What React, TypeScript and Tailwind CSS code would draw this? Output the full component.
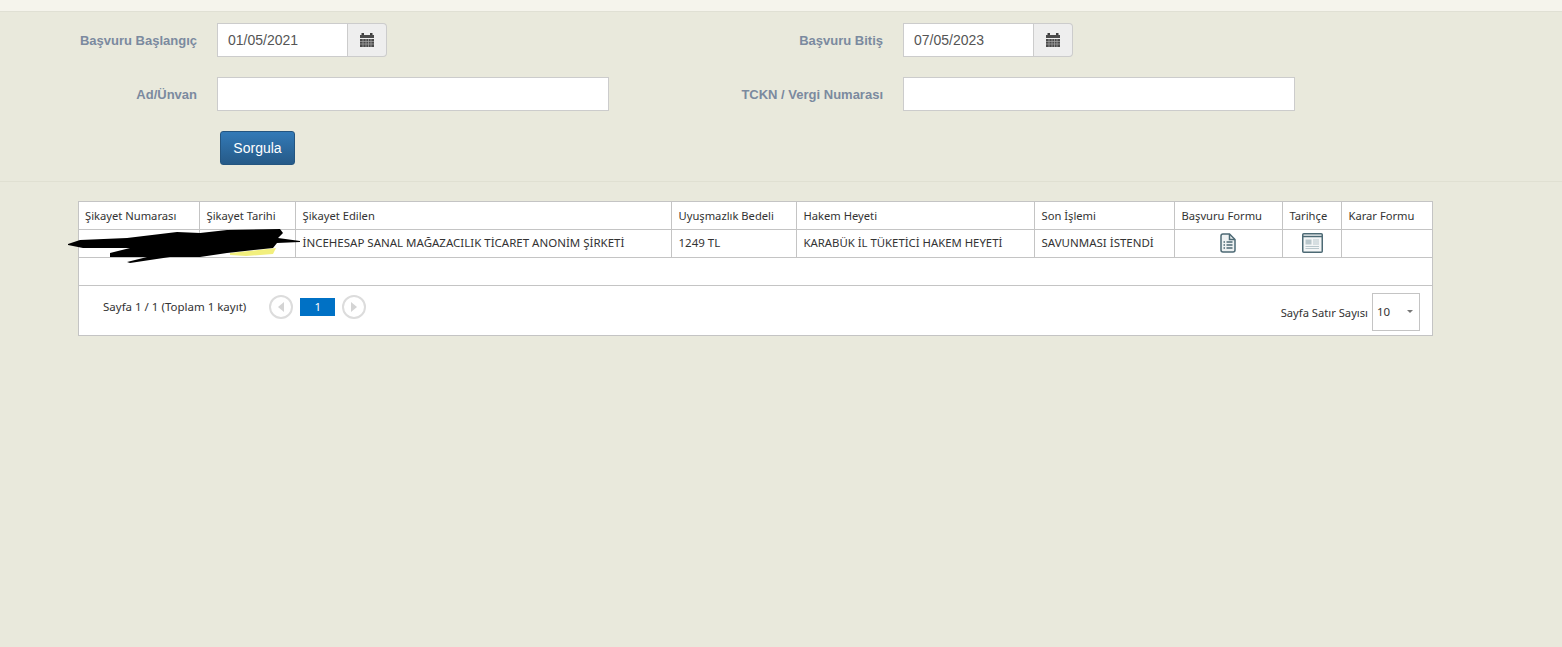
const columns = [
  { title: 'Şikayet Numarası', width: 'w-[120px]' },
  { title: 'Şikayet Tarihi', width: 'w-[96px]' },
  { title: 'Şikayet Edilen', width: 'w-[376px]' },
  { title: 'Uyuşmazlık Bedeli', width: 'w-[125px]' },
  { title: 'Hakem Heyeti', width: 'w-[238px]' },
  { title: 'Son İşlemi', width: 'w-[140px]' },
  { title: 'Başvuru Formu', width: 'w-[108px]' },
  { title: 'Tarihçe', width: 'w-[59px]' },
  { title: 'Karar Formu', width: 'w-[91px]' },
];

function CalendarIcon() {
  return (
    <svg width="14" height="14" viewBox="0 0 14 14" fill="#4a4a4a">
      <rect x="1.500" y="0" width="2.500" height="3" fill="#3f3f3f" />
      <rect x="10" y="0" width="2.500" height="3" fill="#3f3f3f" />
      <path d="M0 2h14v3H0z" />
      <path d="M0 6h14v8H0z" />
      <path d="M3 6v8M6 6v8M8.500 6v8M11 6v8M0 8.500h14M0 11h14" stroke="#a9a9a9" strokeWidth="0.700" />
    </svg>
  );
}

function DateField({ value }: { value: string }) {
  return (
    <div className="flex h-[34px] w-[170px]">
      <input
        readOnly
        value={value}
        className="h-full w-[131px] border border-[#ccc] bg-white px-[10px] text-[14px] text-[#555] outline-none"
      />
      <div className="flex h-full w-[39px] items-center justify-center rounded-r border border-l-0 border-[#ccc] bg-[#eee]">
        <CalendarIcon />
      </div>
    </div>
  );
}

function FieldLabel({ children, width }: { children: string; width: string }) {
  return <label className={`${width} pt-[2px] text-right text-[13px] font-bold text-[#7b8a9f]`}>{children}</label>;
}

function FormIcon() {
  return (
    <svg width="16" height="20" viewBox="0 0 16 20" fill="none" stroke="#4d6a75" strokeWidth="1.500" className="mx-auto">
      <path d="M3 1h6.500L15 6.500V17a2 2 0 0 1-2 2H3a2 2 0 0 1-2-2V3a2 2 0 0 1 2-2z" fill="#eef2f3" />
      <path d="M9.500 1v5.500H15" />
      <path d="M3.500 9h1.500M3.500 12h1.500M3.500 15h1.500M6.500 9h6M6.500 12h6M6.500 15h6" strokeWidth="1.400" />
    </svg>
  );
}

function HistoryIcon() {
  return (
    <svg width="21" height="20" viewBox="0 0 21 20" fill="none" stroke="#4d6a75" className="mx-auto translate-x-[1px]">
      <rect x="0.750" y="0.750" width="19.500" height="18.500" rx="1" fill="#f4f6f7" strokeWidth="1.500" />
      <path d="M1 3.500h19" strokeWidth="1.500" />
      <rect x="3.500" y="6.500" width="6" height="5" fill="#b9c7cc" stroke="none" />
      <path d="M11 7h6M11 9h6M11 11h6M3.500 13.500h13.500M3.500 15.500h13.500" stroke="#b9c7cc" />
    </svg>
  );
}

function Scribble() {
  return (
    <svg
      width="240"
      height="40"
      viewBox="0 0 240 40"
      className="pointer-events-none absolute left-[66px] top-[228px]"
    >
      <path d="M164 25l46-5-3 6-27 2-16-1z" fill="#f2ef7d" />
      <path
        d="M2 16l12-4 47-2 50-6 23 1 27-3 53-1 3 4-5 5 22 3v1l-23 1-4 5-46 5-27 4-30 0-40 6-3-1 20-5-37 0 0-4 20-5-47 0-15-3z"
        fill="#000"
      />
    </svg>
  );
}

export default function App() {
  return (
    <div className="relative min-h-[647px] bg-[#e9e9dc] font-['Liberation_Sans',sans-serif]">
      <div className="h-3 border-b border-[#e0e0d4] bg-[#f5f4ec]" />

      <form className="h-[170px] border-b border-[#e0e0d2] pt-[11px]">
        <div className="flex h-[34px] items-center">
          <FieldLabel width="w-[197px]">Başvuru Başlangıç</FieldLabel>
          <div className="ml-5">
            <DateField value="01/05/2021" />
          </div>
          <FieldLabel width="w-[496px]">Başvuru Bitiş</FieldLabel>
          <div className="ml-5">
            <DateField value="07/05/2023" />
          </div>
        </div>
        <div className="mt-5 flex h-[34px] items-center">
          <FieldLabel width="w-[197px]">Ad/Ünvan</FieldLabel>
          <input className="ml-5 h-full w-[392px] border border-[#ccc] bg-white outline-none" />
          <FieldLabel width="w-[274px]">TCKN / Vergi Numarası</FieldLabel>
          <input className="ml-5 h-full w-[392px] border border-[#ccc] bg-white outline-none" />
        </div>
        <button
          type="button"
          className="ml-[220px] mt-5 h-[34px] w-[75px] rounded-[3px] border border-[#245580] bg-gradient-to-b from-[#337ab7] to-[#265a88] text-[14px] text-white"
        >
          Sorgula
        </button>
      </form>

      <div className="ml-[78px] mt-[19px] w-[1355px] border border-[#c4c4c4] bg-white font-['Noto_Sans',sans-serif] text-[11.500px] text-[#333]">
        <table className="w-full table-fixed border-collapse">
          <thead>
            <tr className="h-[27px] border-b border-[#c4c4c4] text-[11.200px]">
              {columns.map((col, i) => (
                <th
                  key={col.title}
                  className={`${col.width} ${i > 0 ? 'border-l border-[#c4c4c4]' : ''} px-[6px] pt-[2px] text-left font-normal whitespace-nowrap`}
                >
                  <span className={i > 0 ? 'ml-px' : ''}>{col.title}</span>
                </th>
              ))}
            </tr>
          </thead>
          <tbody>
            <tr className="h-7 border-b border-[#c4c4c4]">
              <td />
              <td className="border-l border-[#c4c4c4]" />
              <td className="border-l border-[#c4c4c4] pl-[7px] whitespace-nowrap">İNCEHESAP SANAL MAĞAZACILIK TİCARET ANONİM ŞİRKETİ</td>
              <td className="border-l border-[#c4c4c4] pl-[7px]">1249 TL</td>
              <td className="border-l border-[#c4c4c4] pl-[7px] text-[11.350px] whitespace-nowrap">KARABÜK İL TÜKETİCİ HAKEM HEYETİ</td>
              <td className="border-l border-[#c4c4c4] pl-[7px] whitespace-nowrap">SAVUNMASI İSTENDİ</td>
              <td className="border-l border-[#c4c4c4]">
                <FormIcon />
              </td>
              <td className="border-l border-[#c4c4c4]">
                <HistoryIcon />
              </td>
              <td className="border-l border-[#c4c4c4]" />
            </tr>
            <tr className="h-7 border-b border-[#c4c4c4]">
              <td colSpan={9} />
            </tr>
          </tbody>
        </table>

        <div className="flex h-[49px] items-start justify-between pl-6 pr-3">
          <div className="mt-[9px] flex items-center">
            <span>Sayfa 1 / 1 (Toplam 1 kayıt)</span>
            <span className="ml-[23px] flex h-6 w-6 items-center justify-center rounded-full border-2 border-[#dcdcdc]">
              <span className="h-0 w-0 border-y-[5px] border-r-[6px] border-y-transparent border-r-[#d4d4d4]" />
            </span>
            <span className="ml-[7px] flex h-[18px] w-[35px] items-center justify-center bg-[#0071c5] text-white">1</span>
            <span className="ml-[7px] flex h-6 w-6 items-center justify-center rounded-full border-2 border-[#dcdcdc]">
              <span className="h-0 w-0 border-y-[5px] border-l-[6px] border-y-transparent border-l-[#d4d4d4]" />
            </span>
          </div>
          <div className="mt-[7px] flex items-center">
            <span className="mt-1 text-[11.200px]">Sayfa Satır Sayısı</span>
            <div className="ml-[4px] flex h-[38px] w-12 items-center justify-between border border-[#c4c4c4] pl-1 pr-[6px]">
              <span>10</span>
              <span className="ml-auto h-0 w-0 border-x-[3px] border-t-[3px] border-x-transparent border-t-[#777]" />
            </div>
          </div>
        </div>
      </div>

      <Scribble />
    </div>
  );
}
